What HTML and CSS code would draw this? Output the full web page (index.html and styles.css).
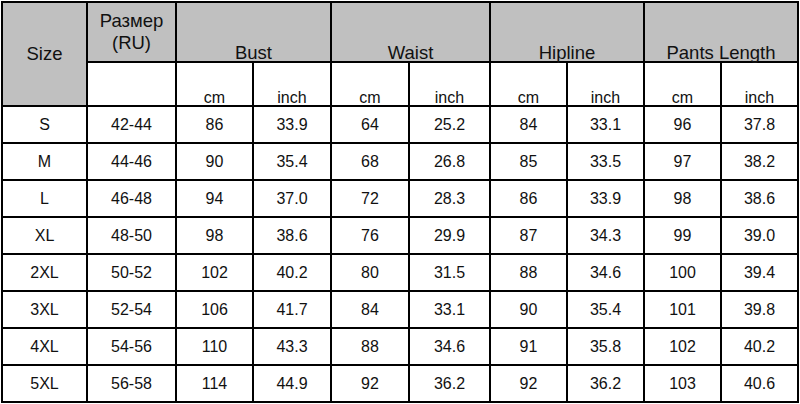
FILE: index.html
```html
<!DOCTYPE html>
<html lang="en">
<head>
<meta charset="utf-8">
<title>Size chart</title>
<link rel="stylesheet" href="styles.css">
</head>
<body>
<div class="chart">
  <div class="cell head size-head">Size</div>
  <div class="cell head ru-head">Размер<br>(RU)</div>
  <div class="cell head group">Bust</div>
  <div class="cell head group">Waist</div>
  <div class="cell head group">Hipline</div>
  <div class="cell head group">Pants Length</div>

  <div class="cell unit"></div>
  <div class="cell unit">cm</div><div class="cell unit">inch</div>
  <div class="cell unit">cm</div><div class="cell unit">inch</div>
  <div class="cell unit">cm</div><div class="cell unit">inch</div>
  <div class="cell unit">cm</div><div class="cell unit">inch</div>

  <div class="cell">S</div><div class="cell">42-44</div><div class="cell">86</div><div class="cell">33.9</div><div class="cell">64</div><div class="cell">25.2</div><div class="cell">84</div><div class="cell">33.1</div><div class="cell">96</div><div class="cell">37.8</div>
  <div class="cell">M</div><div class="cell">44-46</div><div class="cell">90</div><div class="cell">35.4</div><div class="cell">68</div><div class="cell">26.8</div><div class="cell">85</div><div class="cell">33.5</div><div class="cell">97</div><div class="cell">38.2</div>
  <div class="cell">L</div><div class="cell">46-48</div><div class="cell">94</div><div class="cell">37.0</div><div class="cell">72</div><div class="cell">28.3</div><div class="cell">86</div><div class="cell">33.9</div><div class="cell">98</div><div class="cell">38.6</div>
  <div class="cell">XL</div><div class="cell">48-50</div><div class="cell">98</div><div class="cell">38.6</div><div class="cell">76</div><div class="cell">29.9</div><div class="cell">87</div><div class="cell">34.3</div><div class="cell">99</div><div class="cell">39.0</div>
  <div class="cell">2XL</div><div class="cell">50-52</div><div class="cell">102</div><div class="cell">40.2</div><div class="cell">80</div><div class="cell">31.5</div><div class="cell">88</div><div class="cell">34.6</div><div class="cell">100</div><div class="cell">39.4</div>
  <div class="cell">3XL</div><div class="cell">52-54</div><div class="cell">106</div><div class="cell">41.7</div><div class="cell">84</div><div class="cell">33.1</div><div class="cell">90</div><div class="cell">35.4</div><div class="cell">101</div><div class="cell">39.8</div>
  <div class="cell">4XL</div><div class="cell">54-56</div><div class="cell">110</div><div class="cell">43.3</div><div class="cell">88</div><div class="cell">34.6</div><div class="cell">91</div><div class="cell">35.8</div><div class="cell">102</div><div class="cell">40.2</div>
  <div class="cell">5XL</div><div class="cell">56-58</div><div class="cell">114</div><div class="cell">44.9</div><div class="cell">92</div><div class="cell">36.2</div><div class="cell">92</div><div class="cell">36.2</div><div class="cell">103</div><div class="cell">40.6</div>
</div>
</body>
</html>
```

FILE: styles.css
```css
html, body {
  margin: 0;
  padding: 0;
  background: #ffffff;
}

body {
  padding: 1px;
  font-family: "Liberation Sans", Arial, sans-serif;
  color: #111111;
}

.chart {
  display: grid;
  grid-template-columns: 85px 89px 77px 78px 78px 81px 77px 77px 77px 77px;
  grid-template-rows: 60px 44px repeat(8, 37px);
  width: 798px;
  box-sizing: border-box;
  border-top: 2px solid #000;
  border-left: 2px solid #000;
}

.cell {
  box-sizing: border-box;
  border-right: 2px solid #000;
  border-bottom: 2px solid #000;
  display: flex;
  align-items: center;
  justify-content: center;
  text-align: center;
  font-size: 16px;
  line-height: 18px;
}

.head {
  background: #c0c0c0;
  font-size: 18.5px;
}

.size-head {
  grid-row: span 2;
}

.ru-head {
  line-height: 22px;
}

.group {
  grid-column: span 2;
  align-items: flex-end;
  line-height: 17px;
}

.unit {
  align-items: flex-end;
  line-height: 14px;
}
```
